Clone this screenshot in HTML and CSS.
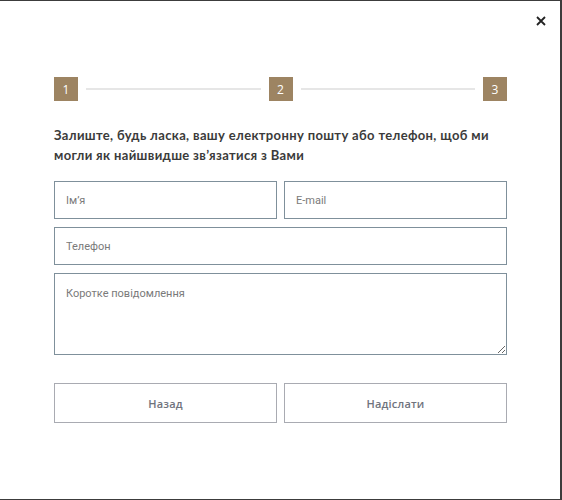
FILE: index.html
```html
<!DOCTYPE html>
<html lang="uk">
<head>
<meta charset="utf-8">
<link rel="stylesheet" href="styles.css">
</head>
<body>
<div class="modal">
  <button class="close" aria-label="close">
    <svg width="10" height="10" viewBox="0 0 10 10"><path d="M1 1 L9 9 M9 1 L1 9" stroke="#222" stroke-width="1.8" fill="none"/></svg>
  </button>
  <div class="content">
    <div class="steps">
      <span class="step">1</span>
      <span class="line"></span>
      <span class="step">2</span>
      <span class="line"></span>
      <span class="step">3</span>
    </div>
    <h2 class="title">Залиште, будь ласка, вашу електронну пошту або телефон, щоб ми могли як найшвидше зв’язатися з Вами</h2>
    <form class="form">
      <div class="row">
        <input class="field" type="text" placeholder="Ім’я">
        <input class="field" type="text" placeholder="E-mail">
      </div>
      <input class="field single" type="text" placeholder="Телефон">
      <textarea class="field area" placeholder="Коротке повідомлення"></textarea>
      <div class="row buttons">
        <button type="button" class="btn">Назад</button>
        <button type="button" class="btn">Надіслати</button>
      </div>
    </form>
  </div>
</div>
</body>
</html>
```

FILE: styles.css
```css
html, body {
  margin: 0;
  padding: 0;
  background: #3c3c3c;
}
body {
  width: 562px;
  height: 500px;
  overflow: hidden;
}
.modal {
  position: relative;
  margin-top: 1px;
  width: 560px;
  height: 498px;
  background: #fff;
  box-sizing: border-box;
  padding: 76px 53px 0 54px;
}
.close {
  position: absolute;
  top: 15px;
  left: 536px;
  width: 10px;
  height: 10px;
  padding: 0;
  border: 0;
  background: none;
  display: flex;
}
.steps {
  display: flex;
  align-items: center;
  gap: 8px;
}
.step {
  width: 24px;
  height: 24px;
  background: #9d8462;
  color: #fff;
  font-family: "Open Sans", sans-serif;
  font-size: 12px;
  display: flex;
  align-items: center;
  justify-content: center;
}
.line {
  flex: 1;
  height: 2px;
  background: #e6e6e6;
}
.title {
  margin: 24px 0 0 0;
  font-family: Lato, sans-serif;
  font-weight: 700;
  font-size: 13px;
  line-height: 20px;
  letter-spacing: 0.35px;
  color: #3b3b3b;
}
.form {
  margin-top: 16px;
  display: flex;
  flex-direction: column;
  gap: 8px;
}
.row {
  display: flex;
  gap: 7px;
}
.field {
  flex: 1;
  min-width: 0;
  box-sizing: border-box;
  height: 38px;
  margin: 0;
  padding: 0 11px;
  border: 1px solid #7f909b;
  border-radius: 0;
  font-family: Roboto, sans-serif;
  font-size: 11px;
  color: #333;
  background: #fff;
  outline: none;
}
.field::placeholder {
  color: #7a7a7a;
}
.single {
  flex: none;
  width: 100%;
}
.area {
  flex: none;
  height: 82px;
  padding: 13px 11px;
  resize: vertical;
  display: block;
}
.buttons {
  margin-top: 20px;
}
.btn {
  flex: 1;
  height: 40px;
  box-sizing: border-box;
  background: #fff;
  border: 1px solid #a9abb2;
  border-radius: 0;
  font-family: "Open Sans", sans-serif;
  font-weight: 600;
  font-size: 11px;
  color: #6f737d;
  letter-spacing: 0.2px;
}
```
